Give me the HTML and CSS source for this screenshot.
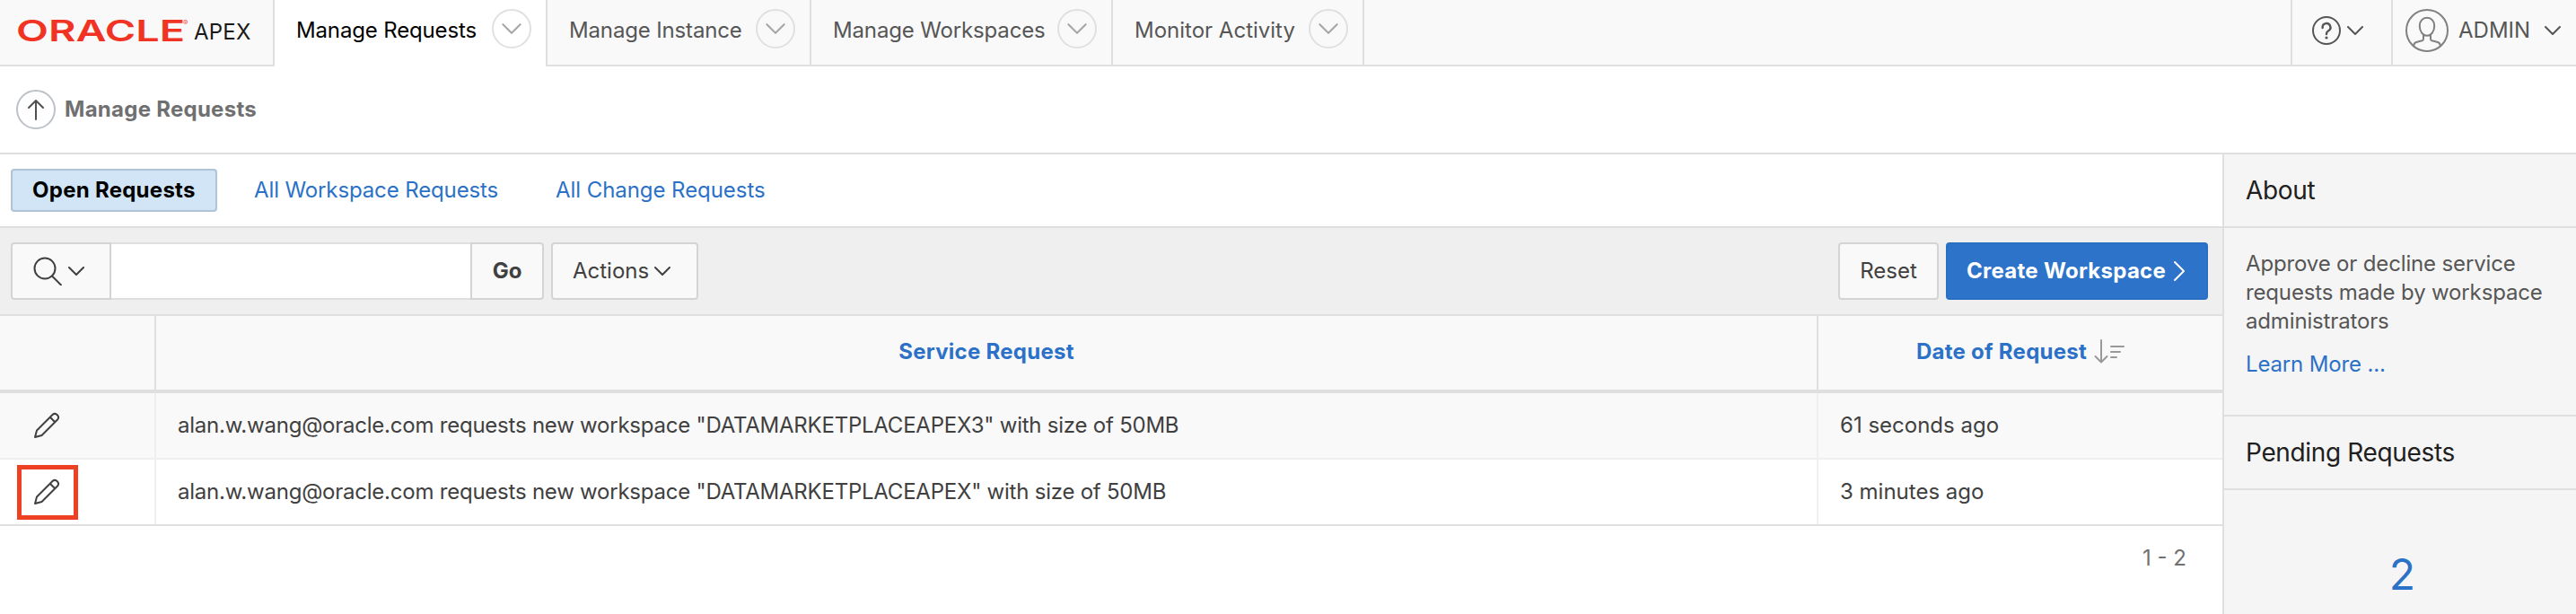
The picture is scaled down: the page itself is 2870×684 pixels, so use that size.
FILE: index.html
```html
<!DOCTYPE html>
<html lang="en">
<head>
<meta charset="utf-8">
<title>Manage Requests</title>
<link rel="stylesheet" href="styles.css">
</head>
<body>
<svg class="defs" aria-hidden="true">
  <symbol id="chevron" viewBox="0 0 18 10"><path d="M1 1l8 8 8-8"/></symbol>
  <symbol id="pencil" viewBox="0 0 30 30"><path d="M2 28L4 20.500 21.500 3a3.900 3.900 0 0 1 5.500 5.500L9.500 26zM18.800 5.700l5.500 5.500"/></symbol>
</svg>
<header class="header">
  <a class="logo">
    <svg class="logo-mark" width="196" height="36" viewBox="0 0 196 36">
      <text class="logo-oracle" x="-2" y="30" textLength="188" lengthAdjust="spacingAndGlyphs">ORACLE</text>
      <text class="logo-reg" x="184" y="12">®</text>
    </svg>
    <span class="logo-apex">APEX</span>
  </a>
  <nav class="nav">
    <a class="nav-item active"><span class="t1">Manage Requests</span><i class="round"><svg class="chev-lg"><use href="#chevron"/></svg></i></a>
    <a class="nav-item"><span class="t2">Manage Instance</span><i class="round"><svg class="chev-lg"><use href="#chevron"/></svg></i></a>
    <a class="nav-item"><span class="t3">Manage Workspaces</span><i class="round"><svg class="chev-lg"><use href="#chevron"/></svg></i></a>
    <a class="nav-item"><span class="t4">Monitor Activity</span><i class="round"><svg class="chev-lg"><use href="#chevron"/></svg></i></a>
  </nav>
  <a class="help">
    <svg class="line" width="32" height="32" viewBox="0 0 32 32"><circle cx="16" cy="16" r="15"/><path d="M11.600 13v-.500a4.400 4.400 0 1 1 6.600 3.700c-1.500.900-2.200 1.700-2.200 3.400v.400" stroke-width="2.400"/><circle class="dot" cx="16" cy="24" r="1.600"/></svg>
    <svg class="chev"><use href="#chevron"/></svg>
  </a>
  <a class="user">
    <svg class="avatar" width="48" height="48" viewBox="0 0 48 48"><circle cx="24" cy="24" r="23"/><path d="M24 9.800c5 0 8.200 3.800 8.200 9 0 6.200-3.500 11-8.200 11s-8.200-4.800-8.200-11c0-5.200 3.200-9 8.200-9zM20 29v4.500c0 1-.500 1.500-1.500 1.800l-6.500 1.700c-2 .600-2.700 1.500-2.700 3.500v1M28 29v4.500c0 1 .500 1.500 1.500 1.800l6.500 1.700c2 .600 2.700 1.500 2.700 3.500v1"/></svg>
    <span class="user-name">ADMIN</span>
    <svg class="chev"><use href="#chevron"/></svg>
  </a>
</header>
<div class="crumb">
  <i class="up"><svg class="line" width="20" height="24" viewBox="0 0 20 24"><path d="M10 23V2M2 10l8-8 8 8"/></svg></i>
  <h1 class="crumb-title">Manage Requests</h1>
</div>
<div class="body">
  <main class="main">
    <div class="tabs">
      <a class="tab current">Open Requests</a>
      <a class="tab link-ws">All Workspace Requests</a>
      <a class="tab link-ch">All Change Requests</a>
    </div>
    <div class="toolbar">
      <div class="search">
        <button class="btn btn-search"><svg class="line" width="32" height="32" viewBox="0 0 32 32"><circle cx="13" cy="13" r="11.500"/><path d="M21 21.500l10 10"/></svg><svg class="chev"><use href="#chevron"/></svg></button>
        <input class="field" type="text" aria-label="Search">
        <button class="btn btn-go">Go</button>
      </div>
      <button class="btn btn-actions"><span>Actions</span><svg class="chev"><use href="#chevron"/></svg></button>
      <button class="btn btn-reset">Reset</button>
      <button class="btn btn-create"><span>Create Workspace</span><svg class="line" width="14" height="24" viewBox="0 0 14 24"><path d="M2 2l10 10L2 22"/></svg></button>
    </div>
    <div class="row head">
      <div class="cell"></div>
      <div class="cell"><span class="h-service">Service Request</span></div>
      <div class="cell"><span class="h-date">Date of Request</span><svg class="sort" width="34" height="28" viewBox="0 0 34 28"><path d="M8 1v24M1.500 19l6.500 6.500L14.500 19M19 8h14M19 14h10M19 20h6"/></svg></div>
    </div>
    <div class="row odd">
      <div class="cell edit"><svg class="pencil"><use href="#pencil"/></svg></div>
      <div class="cell request">alan.w.wang@oracle.com requests new workspace "DATAMARKETPLACEAPEX3" with size of 50MB</div>
      <div class="cell">61 seconds ago</div>
    </div>
    <div class="row last">
      <div class="cell edit"><svg class="pencil"><use href="#pencil"/></svg><span class="highlight"></span></div>
      <div class="cell request">alan.w.wang@oracle.com requests new workspace "DATAMARKETPLACEAPEX" with size of 50MB</div>
      <div class="cell">3 minutes ago</div>
    </div>
    <div class="pager">1 - 2</div>
  </main>
  <aside class="side">
    <h2 class="side-title">About</h2>
    <div class="side-body">
      <p class="side-text">Approve or decline service<br>requests made by workspace<br>administrators</p>
      <a class="side-link">Learn More ...</a>
    </div>
    <h2 class="side-title">Pending Requests</h2>
    <div class="count">2</div>
  </aside>
</div>
</body>
</html>
```
FILE: styles.css
```css
* { box-sizing: border-box; }
body { margin: 0; height: 684px; overflow: hidden; background: #fff; color: #404040; font: 24px/32px Inter, "Liberation Sans", sans-serif; }
h1, h2, p { margin: 0; font-weight: 400; }
svg { display: block; flex: none; fill: none; stroke: currentColor; stroke-width: 2; stroke-linecap: round; stroke-linejoin: round; }
text, .dot { fill: currentColor; stroke: none; }
i { font-style: normal; }
span, a, button, .cell { white-space: nowrap; }
.defs { position: absolute; width: 0; height: 0; }
.chev { width: 18px; height: 10px; }
.chev-lg { width: 22px; height: 12px; stroke-width: 1.700; color: #a6a6a6; }

.header { display: flex; height: 74px; background: #f9f9f9; color: #565656; }
.logo, .help, .user { display: flex; align-items: center; border-bottom: 2px solid #dfdfdf; }
.logo { width: 306px; padding: 0 0 5px 20px; border-right: 2px solid #dfdfdf; }
.logo-mark { overflow: visible; }
.logo-oracle { font: 600 33px Inter, sans-serif; fill: #f03322; }
.logo-reg { font: 8px Inter, sans-serif; fill: #f03322; }
.logo-apex { color: #1a1a1a; font-size: 24px; line-height: 32px; padding-top: 4px; letter-spacing: 0.200px; }
.nav { display: flex; flex: 1; border-bottom: 2px solid #dfdfdf; }
.nav-item { display: flex; align-items: flex-start; justify-content: space-between; height: 72px; padding: 10px 16px 0 24px; border-right: 2px solid #dfdfdf; }
.nav-item span { padding-top: 8px; }
.nav-item:nth-child(1) { width: 304px; }
.nav-item:nth-child(2) { width: 294px; }
.nav-item:nth-child(3) { width: 336px; }
.nav-item:nth-child(4) { width: 280px; }
.nav-item.active { height: 74px; background: #fff; color: #000; }
.t1, .t2, .t3 { letter-spacing: -0.150px; }
.round { display: flex; align-items: center; justify-content: center; width: 44px; height: 44px; border: 2px solid #e0e0e0; border-radius: 50%; }
.help { width: 112px; padding: 0 0 4px 22px; gap: 7px; border-left: 2px solid #dfdfdf; }
.user { width: 206px; padding: 0 17px 4px 14px; border-left: 2px solid #dfdfdf; }
.avatar { color: #808080; }
.user-name { flex: 1; padding-left: 11px; }

.crumb { display: flex; align-items: center; height: 98px; padding-left: 18px; border-bottom: 2px solid #dfdfdf; }
.up { display: flex; align-items: center; justify-content: center; width: 44px; height: 44px; border: 2px solid #bcc2c8; border-radius: 50%; color: #505050; }
.crumb-title { margin-left: 10px; font-size: 24px; font-weight: 700; letter-spacing: 0.270px; color: #707070; }

.body { display: flex; height: 512px; }
.main { width: 2476px; }
.tabs { display: flex; align-items: center; height: 82px; padding-left: 12px; border-bottom: 2px solid #dfdfdf; color: #2b71c7; }
.current { width: 230px; height: 48px; padding: 6px 0 0 22px; margin-right: 41px; border: 2px solid #b0c4d6; border-radius: 4px; background: #d1e5f7; color: #000; font-weight: 700; letter-spacing: 0.270px; }
.link-ws { width: 336px; letter-spacing: -0.120px; }
.link-ch { letter-spacing: -0.060px; }

.toolbar { display: flex; align-items: center; height: 98px; padding: 0 16px 0 12px; background: #efefef; border-bottom: 2px solid #dfdfdf; }
.search { display: flex; margin-right: 8px; }
.btn { display: flex; align-items: center; height: 64px; padding: 0; border: 2px solid #d4d4d4; border-radius: 4px; background: #f9f9f9; color: #404040; font: inherit; }
.btn-search { width: 112px; padding-left: 23px; gap: 7px; border-radius: 4px 0 0 4px; }
.field { width: 400px; height: 64px; border: solid #dfdfdf; border-width: 2px 0; background: #fff; outline: 0; }
.btn-go { width: 82px; justify-content: center; border-radius: 0 4px 4px 0; font-weight: 700; }
.btn-actions { width: 164px; padding: 0 29px 0 22px; justify-content: space-between; margin-right: auto; }
.btn-reset { width: 112px; justify-content: center; margin-right: 8px; }
.btn-create { width: 292px; padding: 0 23px 0 21px; justify-content: space-between; border-color: #2b6fc3; background: #2d73c9; color: #fff; font-weight: 700; letter-spacing: 0.280px; }

.row { display: grid; grid-template-columns: 174px 1852px 450px; height: 74px; border-bottom: 2px solid #efefef; }
.cell { display: flex; align-items: center; padding-left: 24px; border-right: 2px solid #efefef; }
.cell:last-child { border-right: 0; }
.head { height: 86px; border-bottom: 4px solid #dfdfdf; background: #f9f9f9; color: #2b71c7; font-weight: 700; letter-spacing: 0.270px; }
.head .cell { justify-content: center; padding: 0 0 2px; border-color: #dfdfdf; }
.sort { margin-left: 8px; color: #999; }
.odd { background: #f9f9f9; }
.last { border-bottom-color: #dfdfdf; }
.request { letter-spacing: -0.230px; }
.edit { position: relative; padding-left: 37px; }
.pencil { width: 30px; height: 30px; }
.highlight { position: absolute; left: 19px; top: 6px; width: 68px; height: 61px; border: 5px solid #ee4023; }
.pager { padding: 20px 40px 0 0; text-align: right; color: #707070; }

.side { width: 394px; background: #f5f5f5; border-left: 2px solid #dfdfdf; }
.side-title { display: flex; align-items: center; height: 82px; padding-left: 24px; border-bottom: 2px solid #dfdfdf; font-size: 28px; letter-spacing: -0.350px; color: #202020; }
.side-body { height: 210px; padding: 24px 0 0 24px; border-bottom: 2px solid #dfdfdf; color: #565656; white-space: nowrap; letter-spacing: -0.150px; }
.side-link { display: block; margin-top: 16px; color: #2b71c7; }
.count { padding: 62px 0 0 5px; text-align: center; font-size: 48px; line-height: 64px; color: #2b71c7; }
```
